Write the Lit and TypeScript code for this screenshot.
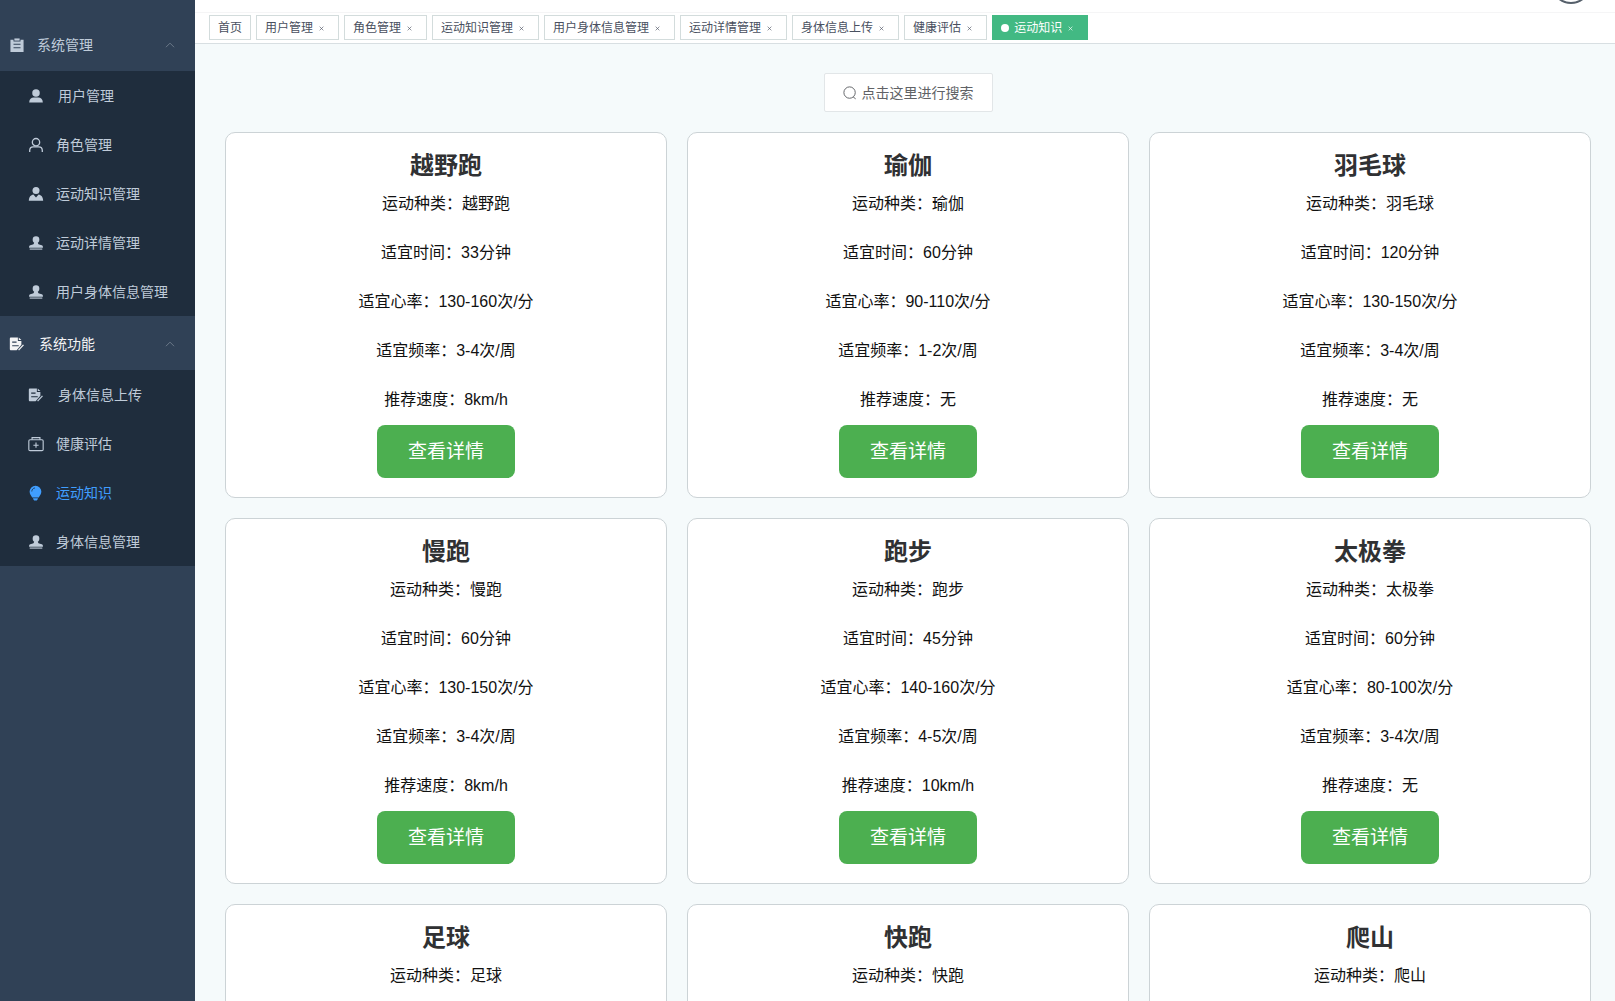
import { LitElement, html, css, svg, nothing } from "lit";
import { customElement, property, state } from "lit/decorators.js";
import { classMap } from "lit/directives/class-map.js";

const fontStack = css`"Liberation Sans", "Noto Sans CJK SC", sans-serif`;

const icons = {
  tickets: svg`
    <path fill="currentColor" fill-rule="evenodd" d="M0.500 2h3.500v2h8V2h3.500v14H0.500zM4 6.500v1.300h8V6.500zM4 10.500v1.300h8v-1.300z"/>
    <path fill="currentColor" d="M5 0.500h6V3H5z"/>`,
  userSolid: svg`
    <circle cx="8" cy="4.500" r="4.300" fill="currentColor"/>
    <path fill="currentColor" d="M0.200 15.400c0-3.800 2.500-5.700 5.200-5.700h5.200c2.700 0 5.200 1.900 5.200 5.700z"/>`,
  user: svg`
    <circle cx="8" cy="4.800" r="4.200" fill="none" stroke="currentColor" stroke-width="1.500"/>
    <path fill="none" stroke="currentColor" stroke-width="1.500" d="M0.800 16v-1.600c0-2.700 1.800-4.300 4-4.300h6.400c2.200 0 4 1.600 4 4.300v1.600"/>`,
  custom: svg`
    <circle cx="8" cy="4" r="4" fill="currentColor"/>
    <path fill="currentColor" d="M5 8.600 8 12l3-3.400c3 .6 5 2.600 5.200 7.200H-.2C0 11.200 2 9.200 5 8.600z"/>`,
  check: svg`
    <circle cx="8" cy="4.200" r="3.800" fill="currentColor"/>
    <path fill="currentColor" d="M6 6h4c0 2.100.5 3.400 1.600 3.800l3 .8c.8.3 1.300.9 1.300 1.800v1H.1v-1c0-.9.5-1.500 1.300-1.800l3-.8C5.500 9.400 6 8.100 6 6z"/>
    <path fill="currentColor" d="M.8 14.300h14.400v1.300H.8z"/>`,
  order: svg`
    <path fill="currentColor" fill-rule="evenodd" d="M1.300 .5h7.700v4h4v4.400L7.600 15.200H1.300C.2 15.200-.2 14.700-.2 13.800V1.900C-.2 1 .2.5 1.300.5zM2.500 5.200v1.400h5V5.200zM2.500 9.300v1.400h7.500V9.300z"/>
    <path fill="currentColor" d="M10 .5l3 3h-3z"/>
    <path fill="none" stroke="currentColor" stroke-width="1.500" d="M9.800 15l5.600-6"/>`,
  firstAid: svg`
    <rect x="-0.200" y="3.200" width="16.400" height="12.400" rx="1.400" fill="none" stroke="currentColor" stroke-width="1.300"/>
    <path fill="none" stroke="currentColor" stroke-width="1.300" d="M3.500 3.200V.700h9v2.500M8 6.400v6M5 9.400h6"/>`,
  opportunity: svg`
    <path fill="currentColor" d="M7.400-.3a6.700 6.700 0 0 1 6.700 6.700c0 2.800-1.700 4.500-2.900 6.700H3.600C2.400 10.900.7 9.200.7 6.400A6.700 6.700 0 0 1 7.400-.3zM4.700 14h5.400v.8L8.900 16.500h-3l-1.200-1.700z"/>
    <path fill="none" stroke="#1f2d3d" stroke-width="0.900" d="M3.200 6.300c0-2.200 1.500-3.900 3.700-4.100"/>`,
  search: svg`
    <circle cx="7.500" cy="7.500" r="6.500" fill="none" stroke="currentColor" stroke-width="1.100"/>
    <path fill="none" stroke="currentColor" stroke-width="1.100" d="M11.600 12.500l2.900 2.200"/>`,
  arrowUp: svg`<path fill="none" stroke="currentColor" stroke-width="1.500" d="M1.500 11.500 8 5l6.500 6.500"/>`,
  close: svg`<path fill="none" stroke="currentColor" stroke-width="2" d="M2 2l12 12M14 2 2 14"/>`,
};

type IconName = keyof typeof icons;

@customElement("ui-icon")
class UiIcon extends LitElement {
  static styles = css`
    :host {
      display: inline-flex;
      flex: none;
      width: 14px;
      height: 14px;
    }
    .glyph {
      width: 100%;
      height: 100%;
      display: block;
      overflow: visible;
    }
  `;
  @property() name: IconName = "user";
  render() {
    return html`<svg class="glyph" viewBox="0 0 16 16" aria-hidden="true">${icons[this.name]}</svg>`;
  }
}

interface MenuItem {
  label: string;
  icon: IconName;
}
interface MenuGroup extends MenuItem {
  current?: boolean;
  items: MenuItem[];
}

const menu: MenuGroup[] = [
  {
    label: "系统管理",
    icon: "tickets",
    items: [
      { label: "用户管理", icon: "userSolid" },
      { label: "角色管理", icon: "user" },
      { label: "运动知识管理", icon: "custom" },
      { label: "运动详情管理", icon: "check" },
      { label: "用户身体信息管理", icon: "check" },
    ],
  },
  {
    label: "系统功能",
    icon: "order",
    current: true,
    items: [
      { label: "身体信息上传", icon: "order" },
      { label: "健康评估", icon: "firstAid" },
      { label: "运动知识", icon: "opportunity" },
      { label: "身体信息管理", icon: "check" },
    ],
  },
];

@customElement("side-menu")
class SideMenu extends LitElement {
  static styles = css`
    :host {
      display: block;
      background: #304156;
      color: #bfcbd9;
      font: 14px/20px ${fontStack};
      overflow: hidden;
    }
    .menu {
      padding-top: 17px;
    }
    .group {
      display: flex;
      align-items: center;
      gap: 13px;
      width: 100%;
      height: 54px;
      padding: 1px 20px 0 10px;
      border: 0;
      background: none;
      color: inherit;
      font: inherit;
      text-align: left;
      cursor: pointer;
    }
    .group.current {
      color: #f4f4f5;
      gap: 15px;
    }
    .group-label {
      flex: 1;
    }
    .arrow {
      width: 10px;
      height: 10px;
      color: #6d7b8b;
    }
    .list {
      list-style: none;
      margin: 0;
      padding: 0;
      background: #1f2d3d;
    }
    .item {
      display: flex;
      align-items: center;
      gap: 13px;
      height: 49px;
      padding-left: 29px;
      color: inherit;
      text-decoration: none;
      white-space: nowrap;
    }
    .entry:first-child .item {
      gap: 15px;
    }
    .item.active {
      color: #409eff;
    }
  `;
  @property() active = "";
  @state() private closed = new Set<string>();

  private toggle(label: string) {
    const next = new Set(this.closed);
    next.has(label) ? next.delete(label) : next.add(label);
    this.closed = next;
  }

  render() {
    return html`<nav class="menu">
      ${menu.map(
        (g) => html`
          <button
            class=${classMap({ group: true, current: !!g.current })}
            aria-expanded=${this.closed.has(g.label) ? "false" : "true"}
            @click=${() => this.toggle(g.label)}
          >
            <ui-icon name=${g.icon}></ui-icon>
            <span class="group-label">${g.label}</span>
            <ui-icon class="arrow" name="arrowUp"></ui-icon>
          </button>
          ${this.closed.has(g.label)
            ? nothing
            : html`<ul class="list">
                ${g.items.map(
                  (i) => html`<li class="entry">
                    <a class=${classMap({ item: true, active: i.label === this.active })} href="#">
                      <ui-icon name=${i.icon}></ui-icon><span>${i.label}</span>
                    </a>
                  </li>`
                )}
              </ul>`}
        `
      )}
    </nav>`;
  }
}

@customElement("tags-bar")
class TagsBar extends LitElement {
  static styles = css`
    :host {
      display: flex;
      gap: 5px;
      padding: 2px 14px 3px;
      background: #fff;
      border-bottom: 1px solid #d8dfe2;
      font: 12px/22px ${fontStack};
    }
    .tag {
      display: flex;
      align-items: center;
      padding: 1px 8px 0;
      border: 1px solid #d3dcdc;
      background: #fff;
      color: #495060;
      white-space: nowrap;
    }
    .tag.active {
      background: #42b983;
      border-color: #42b983;
      color: #fff;
    }
    .dot {
      width: 8px;
      height: 8px;
      margin-right: 5px;
      border-radius: 50%;
      background: #fff;
    }
    .link {
      color: inherit;
      text-decoration: none;
    }
    .close {
      display: flex;
      align-items: center;
      justify-content: center;
      width: 17px;
      height: 16px;
      padding: 0;
      border: 0;
      background: none;
      color: inherit;
      cursor: pointer;
    }
    .cross {
      width: 5px;
      height: 5px;
    }
  `;
  @property() active = "";
  @state() private tags = [
    "首页",
    "用户管理",
    "角色管理",
    "运动知识管理",
    "用户身体信息管理",
    "运动详情管理",
    "身体信息上传",
    "健康评估",
    "运动知识",
  ];

  render() {
    return this.tags.map((t, i) => {
      const active = t === this.active;
      return html`<div class=${classMap({ tag: true, active })}>
        ${active ? html`<span class="dot"></span>` : nothing}
        <a class="link" href="#">${t}</a>
        ${i === 0
          ? nothing
          : html`<button
              class="close"
              aria-label=${"关闭" + t}
              @click=${() => (this.tags = this.tags.filter((x) => x !== t))}
            >
              <ui-icon class="cross" name="close"></ui-icon>
            </button>`}
      </div>`;
    });
  }
}

interface Sport {
  name: string;
  time?: string;
  heart?: string;
  frequency?: string;
  speed?: string;
}

const sports: Sport[] = [
  { name: "越野跑", time: "33分钟", heart: "130-160次/分", frequency: "3-4次/周", speed: "8km/h" },
  { name: "瑜伽", time: "60分钟", heart: "90-110次/分", frequency: "1-2次/周", speed: "无" },
  { name: "羽毛球", time: "120分钟", heart: "130-150次/分", frequency: "3-4次/周", speed: "无" },
  { name: "慢跑", time: "60分钟", heart: "130-150次/分", frequency: "3-4次/周", speed: "8km/h" },
  { name: "跑步", time: "45分钟", heart: "140-160次/分", frequency: "4-5次/周", speed: "10km/h" },
  { name: "太极拳", time: "60分钟", heart: "80-100次/分", frequency: "3-4次/周", speed: "无" },
  { name: "足球" },
  { name: "快跑" },
  { name: "爬山" },
];

@customElement("sport-card")
class SportCard extends LitElement {
  static styles = css`
    :host {
      display: flex;
      flex-direction: column;
      align-items: center;
      padding: 20px 20px 19px;
      border: 1px solid #ccd3d6;
      border-radius: 10px;
      background: #fff;
      font: 16px/49px ${fontStack};
      color: #111;
    }
    .title {
      margin: 0;
      font-size: 24px;
      line-height: 26px;
      font-weight: 700;
      color: #303133;
    }
    .lines {
      padding-bottom: 1px;
      text-align: center;
    }
    .line {
      margin: 0;
    }
    .detail {
      height: 53px;
      margin-top: auto;
      padding: 0 31px;
      border: 0;
      border-radius: 8px;
      background: #4caf50;
      color: #fff;
      font: 19px/27px ${fontStack};
      cursor: pointer;
    }
  `;
  @property({ attribute: false }) sport!: Sport;

  render() {
    const s = this.sport;
    const lines: [string, string | undefined][] = [
      ["运动种类", s.name],
      ["适宜时间", s.time],
      ["适宜心率", s.heart],
      ["适宜频率", s.frequency],
      ["推荐速度", s.speed],
    ];
    return html`
      <h2 class="title">${s.name}</h2>
      <div class="lines">
        ${lines.map(([k, v]) => (v ? html`<p class="line">${k}：${v}</p>` : nothing))}
      </div>
      <button class="detail">查看详情</button>
    `;
  }
}

@customElement("app-root")
class AppRoot extends LitElement {
  static styles = css`
    :host {
      display: grid;
      grid-template-columns: 195px minmax(0, 1fr);
      height: 100vh;
      overflow: hidden;
      font: 14px/20px ${fontStack};
    }
    .page {
      display: flex;
      flex-direction: column;
      min-width: 0;
      min-height: 0;
      background: #f5fafb;
    }
    .navbar {
      display: flex;
      flex: none;
      align-items: flex-end;
      justify-content: flex-end;
      height: 12px;
      padding-right: 24px;
      overflow: hidden;
      background: #fff;
      border-bottom: 1px solid #f5f5f6;
    }
    .avatar {
      flex: none;
      box-sizing: border-box;
      width: 40px;
      height: 40px;
      margin-bottom: 8px;
      border: 2px solid #56606b;
      border-radius: 50%;
    }
    .content {
      flex: 1;
      min-height: 0;
      overflow-y: auto;
      scrollbar-width: none;
      padding: 29px 24px 20px 30px;
    }
    .toolbar {
      display: flex;
      justify-content: center;
      margin-bottom: 20px;
    }
    .search {
      display: flex;
      align-items: center;
      gap: 5px;
      height: 39px;
      padding: 0 18px;
      border: 1px solid #e2e6e8;
      border-radius: 2px;
      background: #fff;
      color: #606266;
      font: inherit;
      cursor: pointer;
    }
    .cards {
      display: grid;
      grid-template-columns: repeat(3, minmax(0, 1fr));
      grid-auto-rows: 1fr;
      gap: 20px;
    }
  `;

  render() {
    return html`
      <side-menu active="运动知识"></side-menu>
      <div class="page">
        <header class="navbar"><div class="avatar"></div></header>
        <tags-bar active="运动知识"></tags-bar>
        <main class="content">
          <div class="toolbar">
            <button class="search"><ui-icon name="search"></ui-icon>点击这里进行搜索</button>
          </div>
          <div class="cards">${sports.map((s) => html`<sport-card .sport=${s}></sport-card>`)}</div>
        </main>
      </div>
    `;
  }
}
